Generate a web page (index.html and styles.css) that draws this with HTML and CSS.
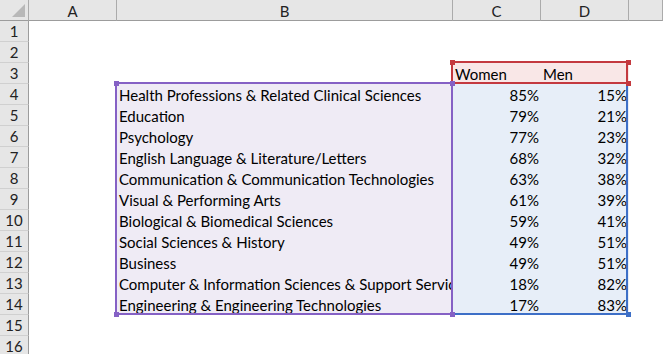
FILE: index.html
```html
<!DOCTYPE html>
<html>
<head>
<meta charset="utf-8">
<link rel="stylesheet" href="styles.css">
</head>
<body>
<div class="sheet">
  <div class="hd corner"><svg class="tri" width="13" height="13" viewBox="0 0 13 13"><polygon points="13,0 13,13 0,13" fill="#b8b8b8"/></svg></div>
  <div class="hd col">A</div>
  <div class="hd col">B</div>
  <div class="hd col">C</div>
  <div class="hd col">D</div>
  <div class="hd col"></div>

  <div class="hd row">1</div><div class="c"></div><div class="c"></div><div class="c"></div><div class="c"></div><div class="c"></div>
  <div class="hd row">2</div><div class="c"></div><div class="c"></div><div class="c"></div><div class="c"></div><div class="c"></div>
  <div class="hd row">3</div><div class="c"></div><div class="c"></div><div class="c pink">Women</div><div class="c pink">Men</div><div class="c"></div>
  <div class="hd row">4</div><div class="c"></div><div class="c lav">Health Professions &amp; Related Clinical Sciences</div><div class="c blue num">85%</div><div class="c blue num">15%</div><div class="c"></div>
  <div class="hd row">5</div><div class="c"></div><div class="c lav">Education</div><div class="c blue num">79%</div><div class="c blue num">21%</div><div class="c"></div>
  <div class="hd row">6</div><div class="c"></div><div class="c lav">Psychology</div><div class="c blue num">77%</div><div class="c blue num">23%</div><div class="c"></div>
  <div class="hd row">7</div><div class="c"></div><div class="c lav">English Language &amp; Literature/Letters</div><div class="c blue num">68%</div><div class="c blue num">32%</div><div class="c"></div>
  <div class="hd row">8</div><div class="c"></div><div class="c lav">Communication &amp; Communication Technologies</div><div class="c blue num">63%</div><div class="c blue num">38%</div><div class="c"></div>
  <div class="hd row">9</div><div class="c"></div><div class="c lav">Visual &amp; Performing Arts</div><div class="c blue num">61%</div><div class="c blue num">39%</div><div class="c"></div>
  <div class="hd row">10</div><div class="c"></div><div class="c lav">Biological &amp; Biomedical Sciences</div><div class="c blue num">59%</div><div class="c blue num">41%</div><div class="c"></div>
  <div class="hd row">11</div><div class="c"></div><div class="c lav">Social Sciences &amp; History</div><div class="c blue num">49%</div><div class="c blue num">51%</div><div class="c"></div>
  <div class="hd row">12</div><div class="c"></div><div class="c lav">Business</div><div class="c blue num">49%</div><div class="c blue num">51%</div><div class="c"></div>
  <div class="hd row">13</div><div class="c"></div><div class="c lav">Computer &amp; Information Sciences &amp; Support Services</div><div class="c blue num">18%</div><div class="c blue num">82%</div><div class="c"></div>
  <div class="hd row">14</div><div class="c"></div><div class="c lav">Engineering &amp; Engineering Technologies</div><div class="c blue num">17%</div><div class="c blue num">83%</div><div class="c"></div>
  <div class="hd row">15</div><div class="c"></div><div class="c"></div><div class="c"></div><div class="c"></div><div class="c"></div>
  <div class="hd row">16</div><div class="c"></div><div class="c"></div><div class="c"></div><div class="c"></div><div class="c"></div>

  <div class="range r-blue"></div>
  <div class="range r-purple"></div>
  <div class="range r-red"></div>

  <div class="handle h-red" style="left:450px;top:60px"></div>
  <div class="handle h-red" style="left:626px;top:60px"></div>
  <div class="handle h-red" style="left:626px;top:81px"></div>
  <div class="handle h-purple" style="left:450px;top:81px"></div>
  <div class="handle h-purple" style="left:114px;top:81px"></div>
  <div class="handle h-purple" style="left:114px;top:312px"></div>
  <div class="handle h-purple" style="left:450px;top:312px"></div>
  <div class="handle h-blue" style="left:626px;top:312px"></div>
</div>
</body>
</html>
```

FILE: styles.css
```css
html, body {
  margin: 0;
  padding: 0;
  background: #fff;
  overflow: hidden;
}
.sheet {
  position: relative;
  display: grid;
  grid-template-columns: 29px 88px 336px 88px 88px 34px;
  grid-auto-rows: 21px;
  width: 663px;
  height: 354px;
  overflow: hidden;
  font-family: Lato, "Open Sans", sans-serif;
  font-size: 15px;
  color: #000;
}
.hd {
  box-sizing: border-box;
  background: #e6e6e6;
  color: #222;
  display: flex;
  align-items: center;
  justify-content: center;
  font-size: 15px;
}
.col {
  border-right: 1px solid #ababab;
  border-bottom: 1px solid #9c9c9c;
  padding-top: 1px;
}
.corner {
  border-right: 1px solid #ababab;
  border-bottom: 1px solid #9c9c9c;
  align-items: flex-end;
  justify-content: flex-end;
  padding: 0 3px 3px 0;
}
.tri { display: block; }
.row {
  border-right: 1px solid #9c9c9c;
  border-bottom: 1px solid #d0d0d0;
}
.c {
  box-sizing: border-box;
  padding: 0 2px 0 2px;
  white-space: nowrap;
  overflow: hidden;
  display: flex;
  align-items: center;
  min-width: 0;
}
.num { justify-content: flex-end; }
.pink { background: #f9e7e7; }
.lav { background: #efebf5; }
.blue { background: #e7eef8; }
.range {
  position: absolute;
  box-sizing: border-box;
  border: 2px solid;
}
.r-blue { left: 451px; top: 82px; width: 177px; height: 233px; border-color: #3d6fc7; }
.r-purple { left: 115px; top: 82px; width: 338px; height: 233px; border-color: #8561c5; }
.r-red { left: 451px; top: 61px; width: 177px; height: 23px; border-color: #c4393f; }
.handle {
  position: absolute;
  width: 5px;
  height: 5px;
}
.h-red { background: #c4393f; }
.h-purple { background: #8561c5; }
.h-blue { background: #3d6fc7; }
```
